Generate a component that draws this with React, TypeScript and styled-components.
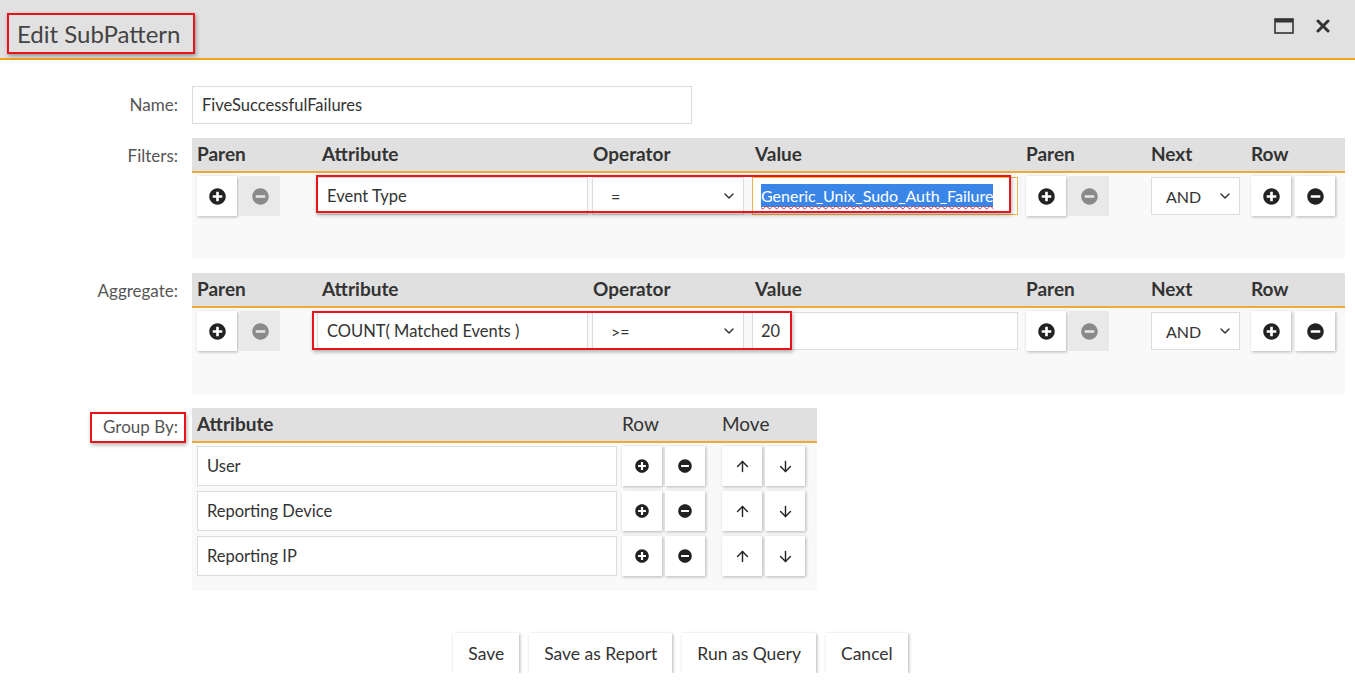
import React from 'react';
import styled, { createGlobalStyle } from 'styled-components';
import { FaPlusCircle, FaMinusCircle } from 'react-icons/fa';
import { ArrowUp, ArrowDown, ChevronDown } from 'lucide-react';

const GlobalStyle = createGlobalStyle`
  html, body { margin: 0; padding: 0; background: #fff; }
  body { font-family: Lato, "Open Sans", "Liberation Sans", sans-serif; color: #333; }
  * { box-sizing: border-box; }
`;

const TitleBar = styled.header`
  height: 60px;
  background: #e1e1e1;
  border-bottom: 2px solid #f5a21b;
  display: flex;
  align-items: flex-start;
  justify-content: space-between;
  padding: 13px 25px 0 7px;
`;

const Title = styled.h1`
  margin: 0;
  font-size: 24px;
  font-weight: 400;
  line-height: 29px;
  color: #444;
  border: 2px solid #e8141b;
  padding: 4px 12px 4px 8px;
  box-shadow: 1px 2px 4px rgba(0, 0, 0, 0.35);
`;

const WindowTools = styled.div`
  display: flex;
  align-items: center;
  gap: 22px;
  padding-top: 5px;
`;

const Form = styled.div`
  display: grid;
  grid-template-columns: 178px auto;
  column-gap: 14px;
  row-gap: 14px;
  padding: 26px 10px 0 0;
  align-items: start;
`;

const Label = styled.div<{ $top: number }>`
  font-size: 17px;
  line-height: 18px;
  color: #555;
  text-align: right;
  padding-top: ${(p) => p.$top}px;
`;

const MarkedLabel = styled.span`
  display: inline-block;
  margin-top: 4px;
  margin-right: -8px;
  border: 2px solid #e8141b;
  padding: 4px 6px 5px 11px;
  box-shadow: 1px 2px 4px rgba(0, 0, 0, 0.3);
`;

const Field = styled.div<{ $width?: number; $focus?: boolean }>`
  height: 38px;
  width: ${(p) => (p.$width ? `${p.$width}px` : '100%')};
  background: #fff;
  border: 1px solid ${(p) => (p.$focus ? '#f0b24a' : '#dcdcdc')};
  padding: 0 9px;
  font-size: 16.5px;
  line-height: 36px;
  color: #333;
  white-space: nowrap;
  overflow: hidden;
`;

const Selected = styled.span`
  font-size: 16px;
  background: #3a86e8;
  color: #fff;
  padding: 2px 0;
  text-decoration: underline wavy #e03030;
  text-decoration-thickness: 1px;
  text-underline-offset: 3px;
`;

const Select = styled.div<{ $padLeft: number }>`
  width: 100%;
  height: 38px;
  background: #fff;
  border: 1px solid #dcdcdc;
  display: flex;
  align-items: center;
  justify-content: space-between;
  padding: 0 6px 0 ${(p) => p.$padLeft}px;
  font-size: 16px;
  color: #333;
`;

const Table = styled.div<{ $width: number }>`
  width: ${(p) => p.$width}px;
`;

const Head = styled.div<{ $cols: string }>`
  display: grid;
  grid-template-columns: ${(p) => p.$cols};
  background: #e0e0e0;
  border-bottom: 2px solid #f0a938;
  height: 35px;
`;

const HeadCell = styled.div<{ $light?: boolean }>`
  padding: 0 5px;
  font-size: 19px;
  font-weight: ${(p) => (p.$light ? 400 : 700)};
  line-height: 32px;
  color: #333;
`;

const Body = styled.div<{ $height?: number; $pad: string }>`
  position: relative;
  background: #f9f9f9;
  padding: ${(p) => p.$pad};
  ${(p) => (p.$height ? `height: ${p.$height}px;` : '')}
  display: flex;
  flex-direction: column;
  gap: 5px;
`;

const Row = styled.div<{ $cols: string }>`
  display: grid;
  grid-template-columns: ${(p) => p.$cols};
  align-items: start;
`;

const Cell = styled.div<{ $pad?: string; $gap?: number }>`
  display: flex;
  gap: ${(p) => p.$gap ?? 3}px;
  padding: ${(p) => p.$pad ?? '0'};
  align-items: start;
`;

const IconBtn = styled.button<{ $off?: boolean }>`
  width: 40px;
  height: 40px;
  border: none;
  padding: 0;
  display: flex;
  align-items: center;
  justify-content: center;
  flex: none;
  background: ${(p) => (p.$off ? '#e9e9e9' : '#fff')};
  color: ${(p) => (p.$off ? '#8a8a8a' : '#222')};
  box-shadow: ${(p) => (p.$off ? 'none' : '1px 1px 3px rgba(0,0,0,0.28)')};
`;

const Highlight = styled.div<{ $l: number; $t: number; $w: number; $h: number }>`
  position: absolute;
  left: ${(p) => p.$l}px;
  top: ${(p) => p.$t}px;
  width: ${(p) => p.$w}px;
  height: ${(p) => p.$h}px;
  border: 2px solid #e8141b;
  box-shadow: 1px 2px 4px rgba(0, 0, 0, 0.3);
  pointer-events: none;
`;

const Footer = styled.div`
  display: flex;
  justify-content: center;
  gap: 10px;
  margin-top: 42px;
  padding-left: 6px;
`;

const Btn = styled.button`
  height: 40px;
  padding: 0 15px;
  background: #fff;
  border: none;
  box-shadow: 1px 1px 3px rgba(0, 0, 0, 0.3);
  font-family: Lato, "Open Sans", sans-serif;
  font-size: 17.5px;
  color: #333;
`;

const FILTER_COLS = '125px 271px 162px 271px 125px 100px 99px';
const GROUP_COLS = '425px 100px 100px';

const Plus = ({ s = 17 }: { s?: number }) => <FaPlusCircle size={s} />;
const Minus = ({ s = 17 }: { s?: number }) => <FaMinusCircle size={s} />;

const FilterHead = () => (
  <Head $cols={FILTER_COLS}>
    {['Paren', 'Attribute', 'Operator', 'Value', 'Paren', 'Next', 'Row'].map((h, i) => (
      <HeadCell key={i}>{h}</HeadCell>
    ))}
  </Head>
);

type FilterRowProps = {
  attr: string;
  op: string;
  value: React.ReactNode;
  focus?: boolean;
};

const FilterRow = ({ attr, op, value, focus }: FilterRowProps) => (
  <Row $cols={FILTER_COLS}>
    <Cell $pad="0 0 0 5px">
      <IconBtn><Plus /></IconBtn>
      <IconBtn $off><Minus /></IconBtn>
    </Cell>
    <Cell $pad="1px 0 0 0">
      <Field>{attr}</Field>
    </Cell>
    <Cell $pad="1px 6px 0 4px">
      <Select $padLeft={18}>
        <span>{op}</span>
        <ChevronDown size={16} strokeWidth={2.2} color="#333" />
      </Select>
    </Cell>
    <Cell $pad="1px 3px 0 2px">
      <Field $focus={focus} style={{ paddingLeft: 8 }}>{value}</Field>
    </Cell>
    <Cell $pad="0 0 0 5px">
      <IconBtn><Plus /></IconBtn>
      <IconBtn $off><Minus /></IconBtn>
    </Cell>
    <Cell $pad="1px 6px 0 5px">
      <Select $padLeft={14}>
        <span>AND</span>
        <ChevronDown size={16} strokeWidth={2.2} color="#333" />
      </Select>
    </Cell>
    <Cell $pad="0 0 0 5px" $gap={4}>
      <IconBtn><Plus /></IconBtn>
      <IconBtn><Minus /></IconBtn>
    </Cell>
  </Row>
);

const GroupRow = ({ name }: { name: string }) => (
  <Row $cols={GROUP_COLS}>
    <Cell $pad="0 0 0 5px">
      <Field style={{ height: 40, lineHeight: '38px' }}>{name}</Field>
    </Cell>
    <Cell $pad="0 0 0 5px">
      <IconBtn><Plus s={14} /></IconBtn>
      <IconBtn><Minus s={14} /></IconBtn>
    </Cell>
    <Cell $pad="0 0 0 5px">
      <IconBtn><ArrowUp size={17} strokeWidth={2} /></IconBtn>
      <IconBtn><ArrowDown size={17} strokeWidth={2} /></IconBtn>
    </Cell>
  </Row>
);

export default function App() {
  return (
    <>
      <GlobalStyle />
      <TitleBar>
        <Title>Edit SubPattern</Title>
        <WindowTools>
          <svg width="20" height="16" viewBox="0 0 20 16">
            <rect x="1" y="1" width="18" height="14" fill="none" stroke="#333" strokeWidth="1.6" />
            <rect x="1" y="1" width="18" height="3.5" fill="#333" />
          </svg>
          <svg width="14" height="14" viewBox="0 0 14 14">
            <path d="M2 2L12 12M12 2L2 12" stroke="#333" strokeWidth="3" strokeLinecap="round" />
          </svg>
        </WindowTools>
      </TitleBar>

      <Form>
        <Label $top={10}>Name:</Label>
        <Field $width={500}>FiveSuccessfulFailures</Field>

        <Label $top={9}>Filters:</Label>
        <Table $width={1153}>
          <FilterHead />
          <Body $height={86} $pad="3px 0 0 0">
            <FilterRow
              attr="Event Type"
              op="="
              focus
              value={<Selected>Generic_Unix_Sudo_Auth_Failure</Selected>}
            />
            <Highlight $l={124} $t={2} $w={695} $h={38} />
          </Body>
        </Table>

        <Label $top={9}>Aggregate:</Label>
        <Table $width={1153}>
          <FilterHead />
          <Body $height={86} $pad="3px 0 0 0">
            <FilterRow attr="COUNT( Matched Events )" op=">=" value="20" />
            <Highlight $l={120} $t={3} $w={480} $h={39} />
          </Body>
        </Table>

        <Label $top={0}>
          <MarkedLabel>Group By:</MarkedLabel>
        </Label>
        <Table $width={625}>
          <Head $cols={GROUP_COLS}>
            <HeadCell>Attribute</HeadCell>
            <HeadCell $light>Row</HeadCell>
            <HeadCell $light>Move</HeadCell>
          </Head>
          <Body $pad="3px 0 15px 0">
            <GroupRow name="User" />
            <GroupRow name="Reporting Device" />
            <GroupRow name="Reporting IP" />
          </Body>
        </Table>
      </Form>

      <Footer>
        <Btn>Save</Btn>
        <Btn>Save as Report</Btn>
        <Btn>Run as Query</Btn>
        <Btn>Cancel</Btn>
      </Footer>
    </>
  );
}
